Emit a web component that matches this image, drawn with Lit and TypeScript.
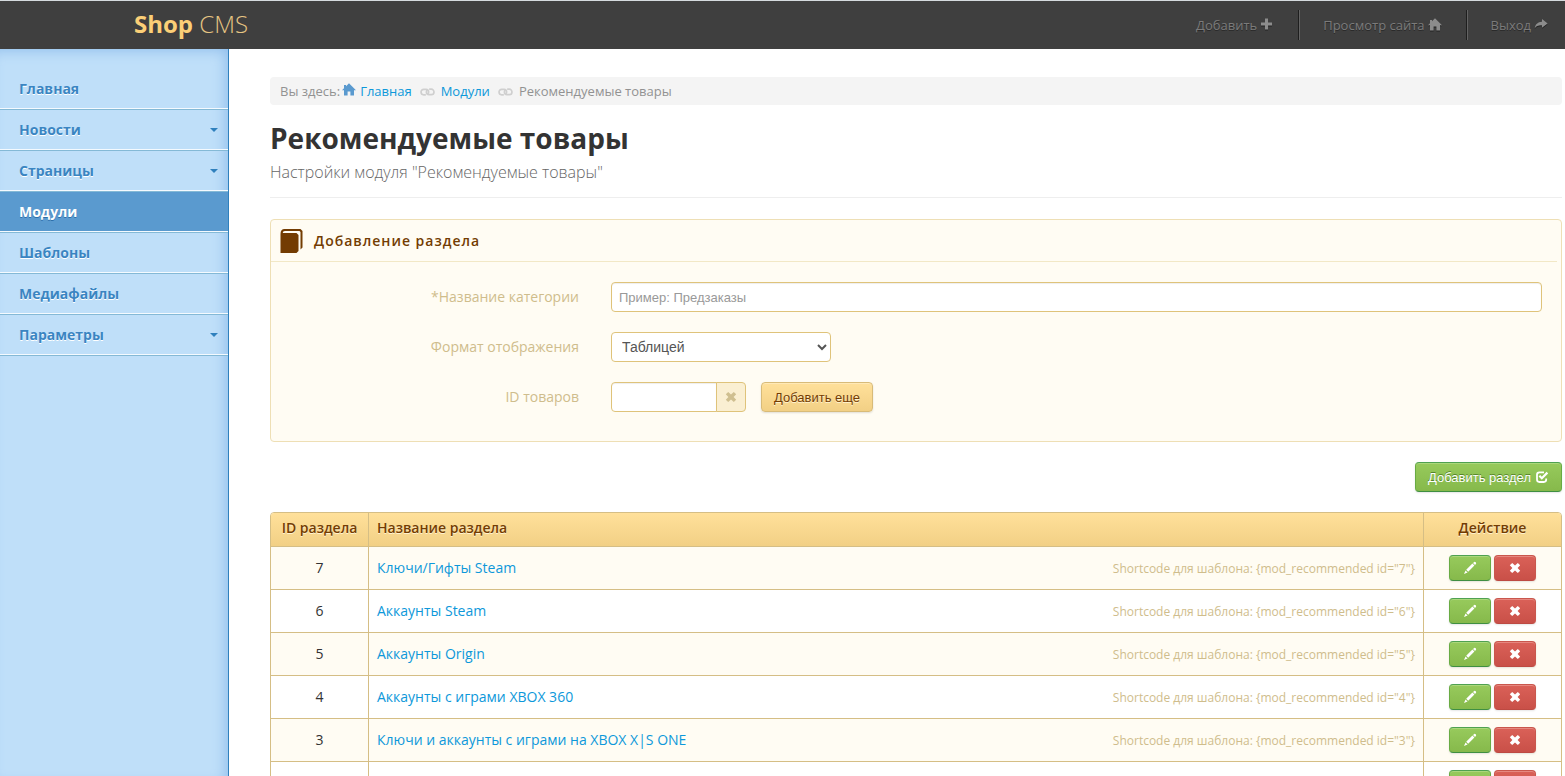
import { LitElement, html, svg, css } from "lit";
import { customElement, property, state } from "lit/decorators.js";
import { classMap } from "lit/directives/class-map.js";

const icons: Record<string, { box: string; body: unknown }> = {
  plus: { box: "0 0 14 14", body: svg`<path d="M5 0.5h3v4h4v3H8v4H5v-4H1v-3h4z" />` },
  home: {
    box: "0 0 14 14",
    body: svg`<path d="M7 0.2 14 7.2H12V12.5H8.4V8.5H5.6V12.5H2V7.2H0L2 5.2V2H4V3.2z" />`,
  },
  share: {
    box: "0 0 14 14",
    body: svg`<path d="M8 1 13.6 5.4 8 9.8V7.4C4.6 7.2 2.4 8 .8 10.2 1.2 6.6 3.6 4 8 3.8z" />`,
  },
  link: {
    box: "0 0 16 10",
    body: svg`<g fill="none" stroke="currentColor" stroke-width="1.8">
      <path d="M6.2 8H4a2.9 2.9 0 0 1 0-5.8h2.4a2.9 2.9 0 0 1 2.8 2.9c0 .8-.5 1.7-1.4 2" />
      <path d="M9.8 2h2.2a2.9 2.9 0 0 1 0 5.8H9.6a2.9 2.9 0 0 1-2.8-2.9c0-.8.5-1.7 1.4-2" />
    </g>`,
  },
  book: {
    box: "0 0 24 26",
    body: svg`<path d="M1.5 6C1.5 2.6 3 1 5.5 1H21.5L23.5 3V19.5L21.5 21.5V4L20.5 3H6C4.5 3 3.8 3.8 3.8 5H17.5L19.5 7V23L17.5 25H1.5z" />`,
  },
  remove: {
    box: "0 0 14 14",
    body: svg`<path d="M4.2 1.9 7 4.6l2.8-2.7 2.4 2.4L9.6 7l2.6 2.7-2.4 2.4L7 9.4l-2.8 2.7-2.4-2.4L4.4 7 1.8 4.3z" />`,
  },
  check: {
    box: "0 0 14 14",
    body: svg`<path fill="none" stroke="currentColor" stroke-width="1.8" d="M9 2.4H4.4a2.4 2.4 0 0 0-2.4 2.4v4.8A2.4 2.4 0 0 0 4.4 12h4.4a2.4 2.4 0 0 0 2.4-2.4V8.5" />
      <path fill="none" stroke="currentColor" stroke-width="2.2" d="M4.4 5.8 6.8 8.2 12.4 2.6" />`,
  },
  pencil: {
    box: "0 0 14 14",
    body: svg`<path d="M11.3.9C12.2.6 13.4 1.8 13.1 2.7L12 4 10 2zM9.4 2.6 11.4 4.6 5.2 10.8 3.2 8.8zM2.5 9.4 4.6 11.5 1 13z" />`,
  },
};

@customElement("ui-icon")
class UiIcon extends LitElement {
  @property() name = "plus";

  static styles = css`
    :host { display: inline-block; width: 14px; height: 14px; flex: none; }
    .glyph { display: block; width: 100%; height: 100%; fill: currentColor; overflow: visible; }
  `;

  render() {
    const icon = icons[this.name];
    return html`<svg class="glyph" viewBox=${icon.box} aria-hidden="true">${icon.body}</svg>`;
  }
}

const menu = [
  { label: "Главная" },
  { label: "Новости", sub: true },
  { label: "Страницы", sub: true },
  { label: "Модули", active: true },
  { label: "Шаблоны" },
  { label: "Медиафайлы" },
  { label: "Параметры", sub: true },
];

const sections = [
  { id: "7", name: "Ключи/Гифты Steam" },
  { id: "6", name: "Аккаунты Steam" },
  { id: "5", name: "Аккаунты Origin" },
  { id: "4", name: "Аккаунты с играми XBOX 360" },
  { id: "3", name: "Ключи и аккаунты с играми на XBOX X|S ONE" },
  { id: "", name: "" },
];

@customElement("app-root")
class AppRoot extends LitElement {
  @state() private rows = sections;

  static styles = css`
    :host {
      display: flex;
      flex-direction: column;
      height: 100vh;
      overflow: hidden;
      background: #fff;
      color: #333;
      font: 14px/20px "Open Sans", sans-serif;
    }
    * { box-sizing: border-box; }
    a { color: #0d98da; text-decoration: none; }

    .topbar {
      flex: none;
      display: flex;
      align-items: center;
      justify-content: space-between;
      height: 49px;
      padding: 0 17px 0 134px;
      border-top: 1px solid #d5dade;
      background: #3f3f3f;
    }
    .logo {
      padding-bottom: 2px;
      color: #e6c583;
      font-size: 24px;
      line-height: 46px;
      font-weight: 300;
    }
    .logo-strong { color: #fbcf77; font-weight: 700; }
    .tools { display: flex; }
    .tool {
      display: flex;
      align-items: center;
      gap: 3px;
      height: 30px;
      color: #7b7b7b;
      font-size: 13px;
      text-shadow: 0 1px 0 #2a2a2a;
    }
    .tool ui-icon { color: #8c8c8c; filter: drop-shadow(0 1px 0 #222); }
    .tool + .tool {
      margin-left: 24px;
      padding-left: 24px;
      border-left: 1px solid #1e1e1e;
      box-shadow: inset 1px 0 0 #636363;
    }

    .layout { flex: 1; display: flex; min-height: 0; }
    .sidebar {
      flex: none;
      width: 229px;
      padding-top: 19px;
      border-right: 1px solid #2f80bd;
      background: #bfdff9;
      box-shadow: inset -6px 5px 14px -4px #8fbdeb;
    }
    .menu { margin: 0; padding: 0; list-style: none; border-bottom: 1px solid #84b9d6; }
    .menu-item { border-top: 1px solid #84b9d6; border-bottom: 1px solid #f4faff; }
    .menu-item:first-child { border-top-color: transparent; }
    .menu-link {
      display: flex;
      align-items: center;
      justify-content: space-between;
      height: 39px;
      padding: 0 10px 0 19px;
      color: #3a85c2;
      font-weight: 700;
      text-shadow: 0 1px 0 #fff;
    }
    .menu-link.active { background: #5a9acf; color: #fff; text-shadow: 0 1px 0 #2d6fa9; }
    .caret {
      border: 4px solid transparent;
      border-top-color: #2f80bd;
      border-bottom: 0;
    }

    .content { flex: 1; min-width: 0; padding: 28px 3px 0 41px; }
    .crumbs {
      display: flex;
      align-items: center;
      height: 28px;
      padding: 0 10px;
      border-radius: 4px;
      background: #f4f4f4;
      color: #929292;
      font-size: 13px;
    }
    .crumbs .home { margin: 0 4px 2px 2px; color: #5a9acf; }
    .crumbs .chain { width: 15px; height: 10px; margin: 2px 6px 0 8px; color: #cfcfcf; }

    .title { margin: 13px 0 0; font-size: 28px; line-height: 40px; font-weight: 700; }
    .lead {
      margin: 0;
      padding: 4px 0 15px;
      border-bottom: 1px solid #eee;
      color: #666;
      font-size: 16px;
      line-height: 20px;
      font-weight: 300;
    }

    .card {
      margin-top: 21px;
      padding-bottom: 29px;
      border: 1px solid #eedfb5;
      border-radius: 4px;
      background: #fffcf3;
    }
    .card-head {
      display: flex;
      align-items: center;
      gap: 11px;
      height: 42px;
      margin-right: 4px;
      padding-left: 8px;
      border-bottom: 1px solid #f2e8c6;
      color: #733c02;
    }
    .card-head ui-icon { width: 24px; height: 26px; }
    .card-title { margin: 0; font-size: 14px; font-weight: 600; letter-spacing: 1px; }
    .form {
      display: grid;
      grid-template-columns: 308px minmax(0, 1fr);
      gap: 20px 32px;
      align-items: center;
      padding: 20px 19px 0 0;
    }
    .label { color: #cfbd8c; text-align: right; }
    .field {
      height: 30px;
      border: 1px solid #dfc37a;
      border-radius: 4px;
      background: #fff;
      color: #555;
      font: 13px "Liberation Sans", Arial, sans-serif;
    }
    .field:focus { outline: 1px solid #dfc37a; }
    .text { width: 100%; padding: 0 7px; box-shadow: inset 0 1px 1px rgba(0, 0, 0, 0.07); }
    .text::placeholder { color: #999; opacity: 1; }
    .choice { width: 220px; padding: 0 6px; font-size: 14px; color: #555; }
    .ids { display: flex; }
    .ids .text { width: 106px; border-radius: 4px 0 0 4px; }
    .clear {
      width: 30px;
      height: 30px;
      margin: 0 15px 0 -1px;
      padding: 0;
      border: 1px solid #dfc37a;
      border-radius: 0 4px 4px 0;
      background: #faefd2;
      color: #cfbf90;
      display: grid;
      place-items: center;
    }

    .btn {
      display: inline-flex;
      align-items: center;
      justify-content: center;
      gap: 4px;
      height: 30px;
      padding: 0 12px;
      border: 1px solid;
      border-radius: 4px;
      font: 13px "Liberation Sans", Arial, sans-serif;
      cursor: pointer;
    }
    .gold {
      border-color: #d8bb78;
      background: linear-gradient(#ffe09a, #f2d085);
      color: #733c02;
      text-shadow: 0 1px 0 #fff3d0;
      box-shadow: inset 0 1px 0 #ffe9b6, 0 1px 2px rgba(0, 0, 0, 0.12);
    }
    .green {
      border-color: #4fa151 #69ab43 #3f8f42;
      background: linear-gradient(#97ca5c, #86b94b);
      color: #fff;
      text-shadow: 0 -1px 0 #55842a;
      box-shadow: inset 0 1px 0 #abd77b, 0 1px 2px rgba(0, 0, 0, 0.1);
    }
    .red {
      border-color: #c9574d #c9574d #bd4a42;
      background: linear-gradient(#da6158, #c95048);
      color: #fff;
      box-shadow: inset 0 1px 0 #e68880, 0 1px 2px rgba(0, 0, 0, 0.1);
    }
    .small { width: 42px; height: 26px; padding: 0; }
    .actions { display: flex; justify-content: flex-end; padding: 20px 0; }

    .table {
      width: 100%;
      border: 1px solid #d5be85;
      border-radius: 4px;
      border-spacing: 0;
      overflow: hidden;
      table-layout: fixed;
    }
    .th {
      height: 33px;
      padding: 0 8px 4px;
      background: linear-gradient(#ffe09a, #f2d085);
      color: #733c02;
      font-weight: 600;
      text-align: left;
      text-shadow: 0 1px 0 #fff3d0;
    }
    .td { height: 43px; padding: 0 8px; border-top: 1px solid #d5be85; }
    .th + .th, .td + .td { border-left: 1px solid #d5be85; }
    .row:nth-child(odd) .td { background: #fffcf3; }
    .col-id { width: 97px; text-align: center; }
    .col-act { width: 138px; text-align: center; }
    .entry { display: flex; justify-content: space-between; align-items: baseline; }
    .code { color: #cfbd8c; font-size: 12px; }
    .pair { display: flex; justify-content: center; gap: 3px; }
  `;

  render() {
    return html`
      <header class="topbar">
        <div class="logo"><span class="logo-strong">Shop</span> CMS</div>
        <nav class="tools">
          <a class="tool" href="#add">Добавить <ui-icon name="plus"></ui-icon></a>
          <a class="tool" href="#site">Просмотр сайта <ui-icon name="home"></ui-icon></a>
          <a class="tool" href="#exit">Выход <ui-icon name="share"></ui-icon></a>
        </nav>
      </header>
      <div class="layout">
        <nav class="sidebar">
          <ul class="menu">
            ${menu.map(
              (m) => html`<li class="menu-item">
                <a class=${classMap({ "menu-link": true, active: !!m.active })} href="#menu">
                  ${m.label}${m.sub ? html`<span class="caret"></span>` : null}
                </a>
              </li>`
            )}
          </ul>
        </nav>
        <main class="content">
          <nav class="crumbs">
            <span>Вы здесь:</span>
            <ui-icon class="home" name="home"></ui-icon>
            <a href="#home">Главная</a>
            <ui-icon class="chain" name="link"></ui-icon>
            <a href="#modules">Модули</a>
            <ui-icon class="chain" name="link"></ui-icon>
            <span>Рекомендуемые товары</span>
          </nav>
          <h1 class="title">Рекомендуемые товары</h1>
          <p class="lead">Настройки модуля "Рекомендуемые товары"</p>

          <section class="card">
            <div class="card-head">
              <ui-icon name="book"></ui-icon>
              <h2 class="card-title">Добавление раздела</h2>
            </div>
            <form class="form">
              <label class="label" for="title">*Название категории</label>
              <input class="field text" id="title" type="text" placeholder="Пример: Предзаказы" />
              <label class="label" for="format">Формат отображения</label>
              <select class="field choice" id="format">
                <option>Таблицей</option>
              </select>
              <label class="label" for="goods">ID товаров</label>
              <div class="ids">
                <input class="field text" id="goods" type="text" />
                <button class="clear" type="button"><ui-icon name="remove"></ui-icon></button>
                <button class="btn gold" type="button">Добавить еще</button>
              </div>
            </form>
          </section>

          <div class="actions">
            <button class="btn green" type="button">Добавить раздел <ui-icon name="check"></ui-icon></button>
          </div>

          <table class="table">
            <thead>
              <tr>
                <th class="th col-id">ID раздела</th>
                <th class="th">Название раздела</th>
                <th class="th col-act">Действие</th>
              </tr>
            </thead>
            <tbody>
              ${this.rows.map(
                (r) => html`<tr class="row">
                  <td class="td col-id">${r.id}</td>
                  <td class="td">
                    ${r.id
                      ? html`<div class="entry">
                          <a href="#section">${r.name}</a>
                          <span class="code">Shortcode для шаблона: {mod_recommended id="${r.id}"}</span>
                        </div>`
                      : null}
                  </td>
                  <td class="td col-act">
                    <div class="pair">
                      <button class="btn small green" type="button"><ui-icon name="pencil"></ui-icon></button>
                      <button class="btn small red" type="button"><ui-icon name="remove"></ui-icon></button>
                    </div>
                  </td>
                </tr>`
              )}
            </tbody>
          </table>
        </main>
      </div>
    `;
  }
}
